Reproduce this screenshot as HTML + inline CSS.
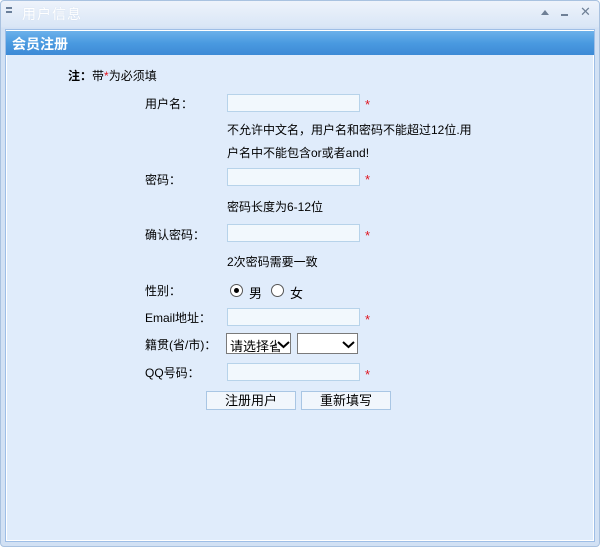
<!DOCTYPE html>
<html><head><meta charset="utf-8"><style>
*{margin:0;padding:0;box-sizing:border-box}
body{width:600px;height:547px;background:#fff;font-family:"Liberation Sans","Noto Sans CJK SC",sans-serif;font-size:12px;color:#000;position:relative;overflow:hidden}
.win{position:absolute;left:0;top:0;width:600px;height:547px;border:1px solid #a9c2e0;border-radius:4px;background:linear-gradient(#eef3fb,#d9e6f6 26px,#d2e1f4 27px);}
.title{position:absolute;left:22px;top:4px;font-size:14px;color:#fff;text-shadow:0 0 1px #c9d7ea;letter-spacing:1px}
.panel{position:absolute;left:5px;top:29px;width:590px;height:513px;border:1px solid #9ebee6;background:#e0ecfb;box-shadow:inset 0 0 0 1px #fff}
.hdr{position:absolute;left:6px;top:31px;width:588px;height:24px;background:linear-gradient(#6cb1ea,#4a9ae0 50%,#3d8ad6);}
.hdr span{position:absolute;left:6px;top:3px;color:#fff;font-size:14px;font-weight:bold}
.a{position:absolute;white-space:nowrap}
.in{position:absolute;left:227px;width:133px;height:18px;border:1px solid #b7d3ea;background:#f2f8fd}
.st{position:absolute;left:365px;color:#e0141e;font-size:13px}
.sel{position:absolute;top:333px;height:21px;border:1px solid #7a7a7a;background:#fff;font-size:13px;padding:2px 0 0 3px;overflow:hidden}
.sel svg{position:absolute;top:6px}
.btn{position:absolute;top:391px;width:90px;height:19px;border:1px solid #a9c6e4;background:#f1f6fc;text-align:center;font-size:13px;line-height:17px}
.rad{position:absolute;width:13px;height:13px;border:1px solid #555;border-radius:50%;background:#fff;top:284px}
</style></head><body>
<div class="win"></div>
<div class="a" style="left:6px;top:7px;width:6px;height:2px;background:#6a7f9a"></div>
<div class="a" style="left:6px;top:11px;width:6px;height:2px;background:#6a7f9a"></div>
<div class="title">用户信息</div>
<div class="a" style="left:541px;top:10px;width:0;height:0;border-left:4px solid transparent;border-right:4px solid transparent;border-bottom:5px solid #6f8096"></div>
<div class="a" style="left:561px;top:14px;width:7px;height:2px;background:#6f8096"></div>
<div class="a" style="left:580px;top:4px;color:#6f8096;font-size:13px">✕</div>
<div class="panel"></div>
<div class="hdr"><span>会员注册</span></div>
<div class="a" style="left:68px;top:67px;font-size:12px"><b>注：</b>带<span style="color:#e0141e">*</span>为必须填</div>
<div class="a" style="left:145px;top:95px">用户名：</div>
<div class="in" style="top:94px"></div><div class="st" style="top:97px">*</div>
<div class="a" style="left:227px;top:121px">不允许中文名，用户名和密码不能超过12位.用</div>
<div class="a" style="left:227px;top:144px">户名中不能包含or或者and!</div>
<div class="a" style="left:145px;top:171px">密码：</div>
<div class="in" style="top:168px"></div><div class="st" style="top:172px">*</div>
<div class="a" style="left:227px;top:198px">密码长度为6-12位</div>
<div class="a" style="left:145px;top:226px">确认密码：</div>
<div class="in" style="top:224px"></div><div class="st" style="top:228px">*</div>
<div class="a" style="left:227px;top:253px">2次密码需要一致</div>
<div class="a" style="left:145px;top:282px">性别：</div>
<div class="rad" style="left:230px"><div style="position:absolute;left:3px;top:3px;width:5px;height:5px;border-radius:50%;background:#000"></div></div>
<div class="a" style="left:249px;top:283px;font-size:13px">男</div>
<div class="rad" style="left:271px"></div>
<div class="a" style="left:290px;top:283px;font-size:13px">女</div>
<div class="a" style="left:145px;top:309px">Email地址：</div>
<div class="in" style="top:308px"></div><div class="st" style="top:312px">*</div>
<div class="a" style="left:145px;top:336px">籍贯(省/市)：</div>
<div class="sel" style="left:226px;width:65px">请选择省<svg style="left:50px;background:#fff" width="13" height="9" viewBox="0 0 13 9"><path d="M1 2 L6.5 7 L12 2" fill="none" stroke="#000" stroke-width="2"/></svg></div>
<div class="sel" style="left:297px;width:61px"><svg style="left:44px" width="13" height="9" viewBox="0 0 13 9"><path d="M1 2 L6.5 7 L12 2" fill="none" stroke="#000" stroke-width="2"/></svg></div>
<div class="a" style="left:145px;top:364px">QQ号码：</div>
<div class="in" style="top:363px"></div><div class="st" style="top:367px">*</div>
<div class="btn" style="left:206px">注册用户</div>
<div class="btn" style="left:301px">重新填写</div>
</body></html>
